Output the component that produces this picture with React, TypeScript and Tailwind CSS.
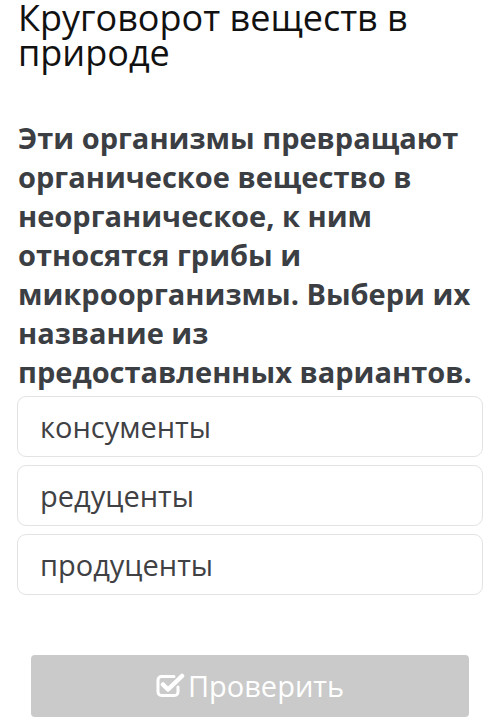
import React from 'react'

const options = ['консументы', 'редуценты', 'продуценты']

function CheckSquareIcon() {
  return (
    <svg width="29" height="25" viewBox="0 0 29 25" className="mr-[3px] -mt-[2px]">
      <path
        d="M22 14v5a3.5 3.5 0 0 1-3.5 3.5H5.5A3.5 3.5 0 0 1 2 19V7a3.5 3.5 0 0 1 3.5-3.5H18"
        fill="none"
        stroke="white"
        strokeWidth="3"
        strokeLinecap="round"
      />
      <path d="M7 11.5l5 5L26 3" fill="none" stroke="white" strokeWidth="4.5" strokeLinejoin="round" strokeLinecap="round" />
    </svg>
  )
}

export default function App() {
  return (
    <div className="w-[500px] h-[722px] bg-white overflow-hidden font-['Open_Sans',sans-serif]">
      <h1 className="px-[18px] text-[36px] leading-[35px] font-normal text-[#111]">
        Круговорот веществ в природе
      </h1>

      <p className="mt-[48px] px-[18px] text-[29px] leading-[39px] font-bold text-[#3b3e43]">
        Эти организмы превращают органическое вещество в неорганическое, к ним относятся грибы и
        микроорганизмы. Выбери их название из предоставленных вариантов.
      </p>

      <div className="flex flex-col gap-[8px] px-[17px] mt-[5px]">
        {options.map((o) => (
          <div
            key={o}
            className="h-[61px] flex items-center pl-[22px] border border-[#e3e3e3] rounded-[9px] text-[29px] text-[#3f4144]"
          >
            {o}
          </div>
        ))}
      </div>

      <div className="px-[31px] mt-[60px]">
        <button className="w-full h-[62px] flex items-center justify-center bg-[#cacaca] rounded-[4px] text-white text-[29px]">
          <CheckSquareIcon />
          Проверить
        </button>
      </div>
    </div>
  )
}
